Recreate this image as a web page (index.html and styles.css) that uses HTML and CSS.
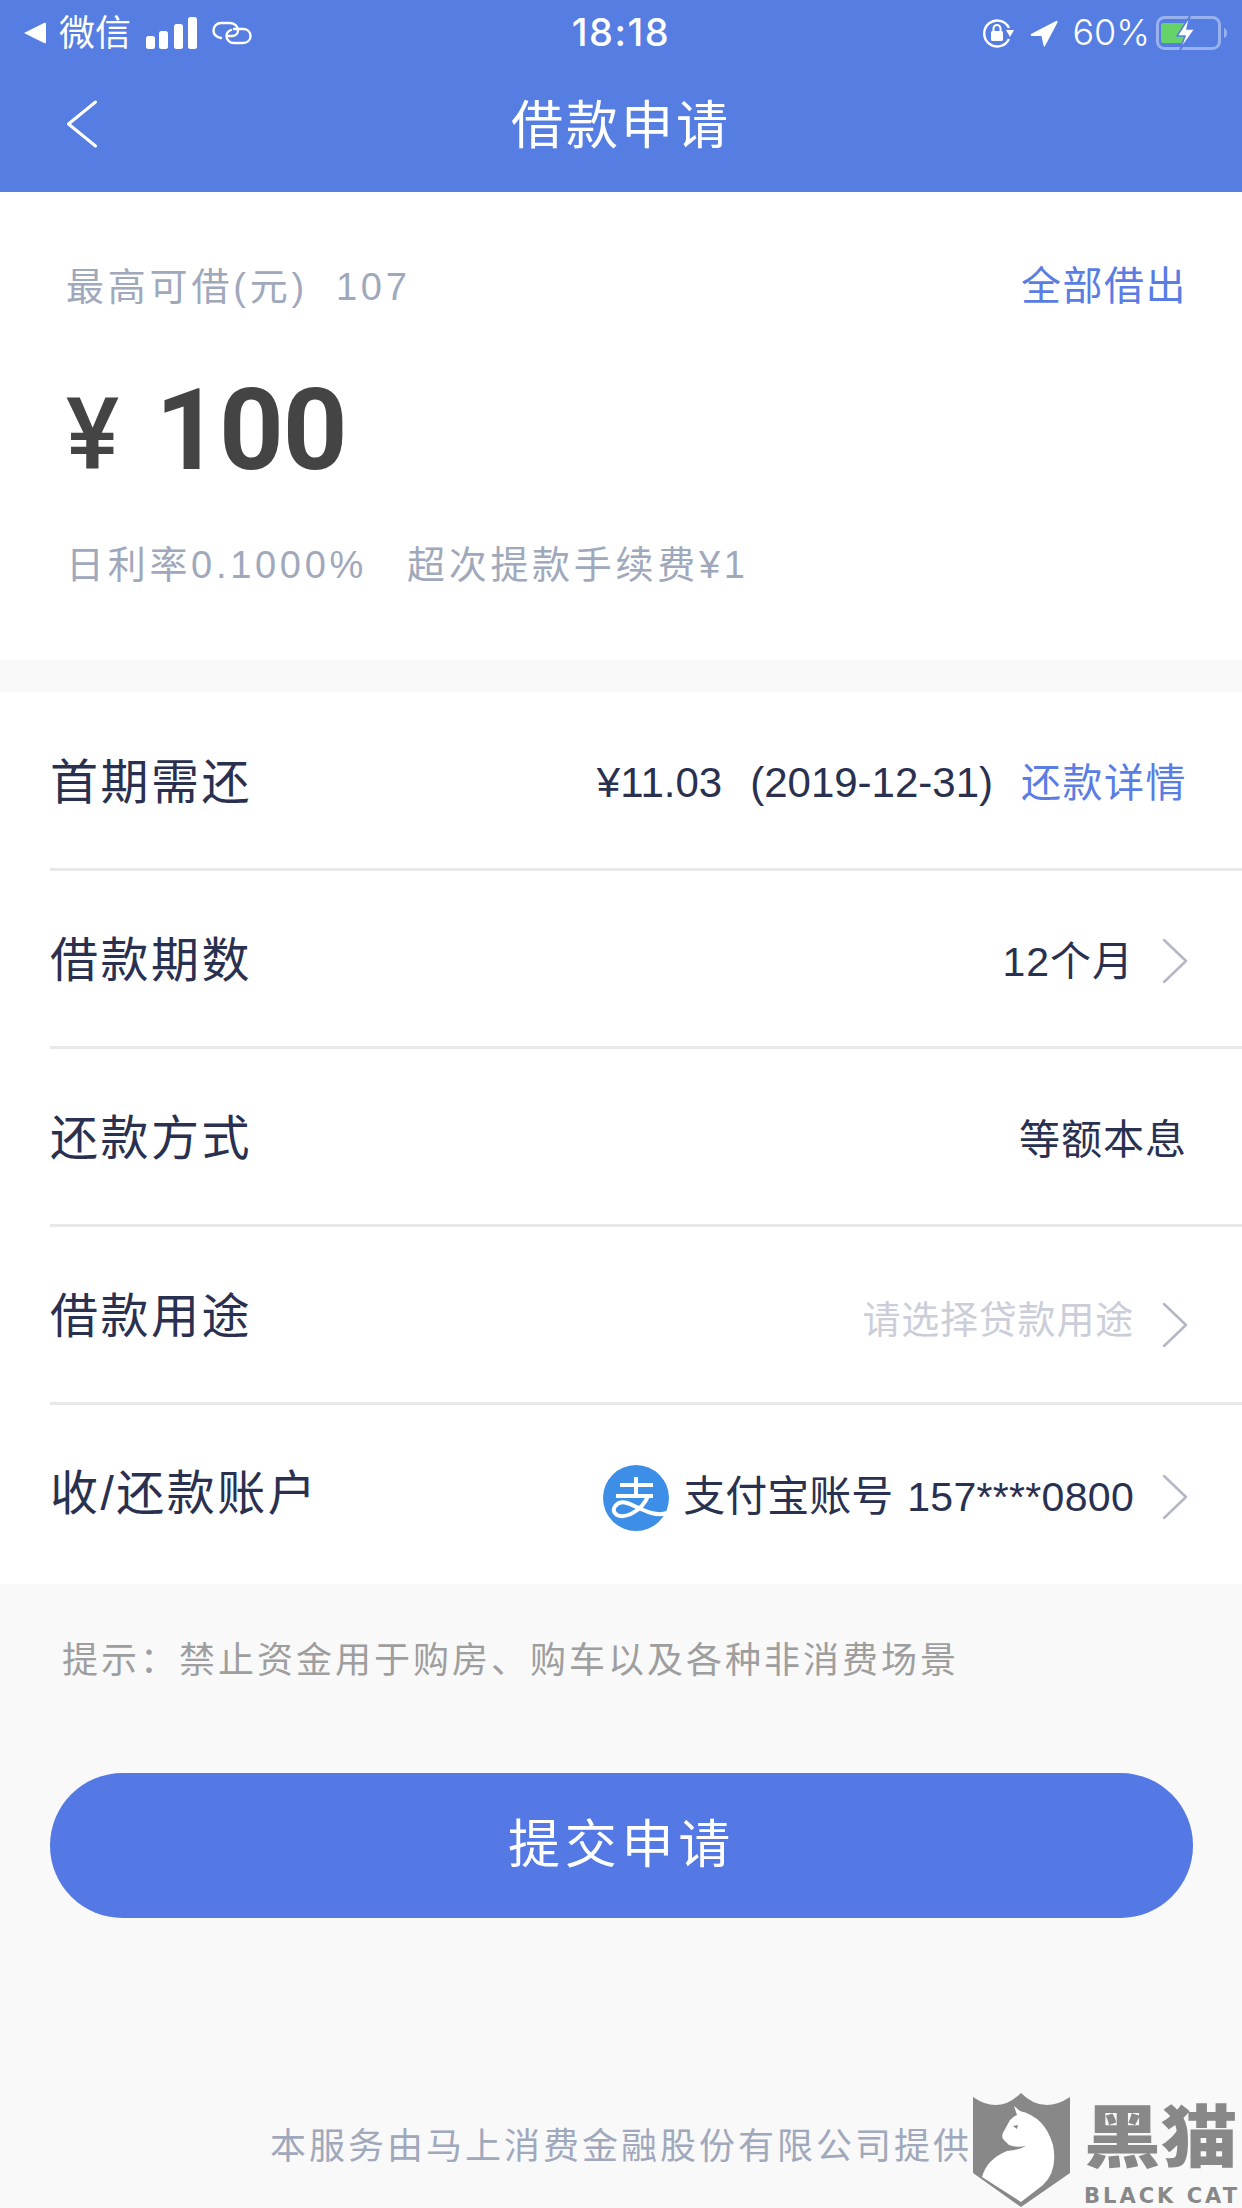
FILE: index.html
```html
<!DOCTYPE html>
<html lang="zh-CN">

<head>
    <meta charset="UTF-8">
    <title>借款申请</title>
    <link rel="stylesheet" href="styles.css">
</head>

<body>
    <header class="top">
        <div class="status">
            <div class="status-left">
                <svg class="icon-tri" width="23" height="22" viewBox="0 0 23 22"><path d="M1 11 21 1Q23 0 23 2V20Q23 22 21 21Z" fill="#fff"/></svg>
                <span class="carrier">微信</span>
                <svg class="icon-signal" width="51" height="32" viewBox="0 0 51 32" fill="#fff">
                    <rect x="0" y="19" width="9" height="13" rx="2.5"/>
                    <rect x="13" y="14" width="9" height="18" rx="2.5"/>
                    <rect x="28" y="7" width="9" height="25" rx="2.5"/>
                    <rect x="42" y="0" width="9" height="32" rx="2.5"/>
                </svg>
                <svg class="icon-link" width="40" height="24" viewBox="0 0 40 24" fill="none" stroke="#fff" stroke-width="2.4" stroke-linecap="round">
                    <path d="M9 17C4 16 1.500 13 1.500 9.500 1.500 5 5 2 9 2H18C23 2 26 6 26 9.500 26 12.500 23.500 15 20 15H16"/>
                    <path d="M22 8H31C35.500 8 38.500 11 38.500 15 38.500 19 35.500 22 31 22H22C17.500 22 14.500 18.500 14.500 15 14.500 12 16.500 10 19 9"/>
                </svg>
            </div>
            <div class="clock">18:18</div>
            <div class="status-right">
                <svg class="icon-rotate" width="32" height="30" viewBox="0 0 32 30" fill="none">
                    <path d="M27 10A13 13 0 1 0 27 21" stroke="#fff" stroke-width="2.4"/>
                    <path d="M24 12H32L28 19Z" fill="#fff"/>
                    <rect x="9" y="13" width="12" height="10" rx="1.500" fill="#fff"/>
                    <path d="M11.500 13V10.500A3.500 3.500 0 0 1 18.500 10.500V13" stroke="#fff" stroke-width="2"/>
                </svg>
                <svg class="icon-arrow" width="28" height="27" viewBox="0 0 28 27"><path d="M1 14 26 1Q28 0 27.500 2.500L15 26Q14 27.500 13.500 25.500L11.500 16 1.500 16Q0 15 1 14Z" fill="#fff"/></svg>
                <span class="percent">60%</span>
                <svg class="icon-battery" width="72" height="36" viewBox="0 0 72 36">
                    <rect x="1.500" y="2.500" width="62" height="31" rx="7" fill="none" stroke="#fff" stroke-opacity=".4" stroke-width="3"/>
                    <path d="M68 13Q71 14 71 18 71 22 68 23Z" fill="#fff" fill-opacity=".4"/>
                    <path d="M7 8H29V28H7Q5 28 5 26V10Q5 8 7 8Z" fill="#66d26a"/>
                    <path d="M34 1 21 21H29L24 35 39 14H31Z" fill="#fff" stroke="#567de2" stroke-width="1.500"/>
                </svg>
            </div>
        </div>
        <nav class="nav">
            <svg class="back" width="32" height="48" viewBox="0 0 32 48" fill="none"><path d="M29.500 2 2.500 24 29.500 46" stroke="#fff" stroke-width="3" stroke-linecap="round" stroke-linejoin="round"/></svg>
            <h1 class="title">借款申请</h1>
            <span></span>
        </nav>
    </header>

    <section class="hero">
        <div class="hero-top">
            <span class="hero-limit">最高可借(元)<span class="hero-max">107</span></span>
            <a class="link link-all">全部借出</a>
        </div>
        <div class="amount"><span class="amount-sign">¥</span><span class="amount-value">100</span></div>
        <div class="hero-sub"><span>日利率0.1000%</span><span>超次提款手续费¥1</span></div>
    </section>

    <section class="rows">
        <div class="row">
            <span class="row-label">首期需还</span>
            <div class="row-value row-first">
                <span>¥11.03</span><span>(2019-12-31)</span><a class="link">还款详情</a>
            </div>
        </div>
        <div class="row">
            <span class="row-label">借款期数</span>
            <div class="row-value">
                <span class="term">12个月</span>
                <svg class="chev" width="26" height="46" viewBox="0 0 26 46" fill="none"><path d="M2 2 24 23 2 44" stroke="#b4b7c6" stroke-width="2.500" stroke-linecap="round" stroke-linejoin="round"/></svg>
            </div>
        </div>
        <div class="row">
            <span class="row-label">还款方式</span>
            <div class="row-value"><span class="method">等额本息</span></div>
        </div>
        <div class="row">
            <span class="row-label">借款用途</span>
            <div class="row-value">
                <span class="placeholder">请选择贷款用途</span>
                <svg class="chev chev-low" width="26" height="46" viewBox="0 0 26 46" fill="none"><path d="M2 2 24 23 2 44" stroke="#b4b7c6" stroke-width="2.500" stroke-linecap="round" stroke-linejoin="round"/></svg>
            </div>
        </div>
        <div class="row row-account">
            <span class="row-label">收/还款账户</span>
            <div class="row-value">
                <svg class="alipay" width="66" height="66" viewBox="0 0 66 66" fill="none">
                    <circle cx="33" cy="33" r="33" fill="#3d8ee6"/>
                    <path d="M17 20H50M33 12V29M13 31H50" stroke="#fff" stroke-width="4"/>
                    <path d="M45 31C39 46 22 54 14 50 6 45 14 35 24 38 34 41 50 53 64 48" stroke="#fff" stroke-width="4"/>
                </svg>
                <span class="account">支付宝账号<span class="account-no">157****0800</span></span>
                <svg class="chev" width="26" height="46" viewBox="0 0 26 46" fill="none"><path d="M2 2 24 23 2 44" stroke="#b4b7c6" stroke-width="2.500" stroke-linecap="round" stroke-linejoin="round"/></svg>
            </div>
        </div>
    </section>

    <p class="tip">提示：禁止资金用于购房、购车以及各种非消费场景</p>

    <div class="submit">提交申请</div>

    <footer class="foot">本服务由马上消费金融股份有限公司提供</footer>

    <!-- watermark sits over the page -->
    <div class="mark">
        <svg class="mark-shield" width="97" height="114" viewBox="0 0 97 114">
            <path d="M0 4Q26 22 48 0 70 22 97 4V80L48 114 0 80Z" fill="#888"/>
            <path d="M41 13 47 18Q72 24 80 52 85 78 70 92L48 109 9 84Q14 66 34 58 46 57 53 53 44 55 36 52L30 46Q28 42 31 38L37 27Q41 23 44 22Z" fill="#fff"/>
            <path d="M40 33 45 32 44 36Z" fill="#888"/>
        </svg>
        <div class="mark-text">
            <span class="mark-cn">黑猫</span>
            <span class="mark-en">BLACK CAT</span>
        </div>
    </div>
</body>

</html>
```

FILE: styles.css
```css
* {
    box-sizing: border-box;
}

body {
    position: relative;
    width: 1242px;
    height: 2208px;
    margin: 0;
    overflow: hidden;
    background-color: #f9f9f9;
    font-family: "Liberation Sans", "Noto Sans CJK SC", sans-serif;
    color: #2a3150;
}

.top {
    height: 192px;
    background-color: #567de2;
    color: #fff;
}

.status {
    display: grid;
    grid-template-columns: 1fr auto 1fr;
    align-items: center;
    height: 62px;
    padding-top: 2px;
}

.status-left {
    display: flex;
    align-items: center;
    padding-left: 23px;
}

.carrier {
    margin-left: 13px;
    padding-top: 2px;
    font-size: 36px;
    line-height: 60px;
}

.icon-signal {
    margin-left: 15px;
}

.icon-link {
    margin-left: 15px;
}

.clock {
    margin-bottom: 3px;
    font-family: Inter, sans-serif;
    font-size: 38px;
    font-weight: 500;
    letter-spacing: 1.500px;
}

.status-right {
    display: flex;
    align-items: center;
    justify-content: flex-end;
    padding-right: 14px;
}

.icon-arrow {
    margin-left: 16px;
}

.percent {
    margin-left: 14px;
    margin-bottom: 3px;
    font-family: Inter, sans-serif;
    font-size: 36px;
    font-weight: 300;
}

.icon-battery {
    margin-left: 6px;
}

.nav {
    display: grid;
    grid-template-columns: 1fr auto 1fr;
    align-items: center;
    height: 130px;
    padding: 0 66px 6px;
}

.title {
    margin: 0 0 6px;
    font-size: 52px;
    font-weight: 400;
    letter-spacing: 3px;
}

.hero {
    height: 468px;
    padding: 66px 55px 0 66px;
    background-color: #fff;
}

.hero-top {
    display: flex;
    justify-content: space-between;
    align-items: center;
    height: 50px;
    font-size: 38px;
}

.hero-limit {
    color: #a0a8bc;
    letter-spacing: 3.800px;
}

.hero-max {
    margin-left: 28px;
}

.link {
    color: #5a7de4;
    font-size: 40px;
    letter-spacing: 1.500px;
}

.amount {
    display: flex;
    align-items: baseline;
    height: 140px;
    margin-top: 53px;
    line-height: 140px;
    color: #444;
    font-family: Roboto, sans-serif;
}

.amount-sign {
    font-size: 100px;
    font-weight: 500;
}

.amount-value {
    margin-left: 36px;
    font-size: 113px;
    font-weight: 700;
    letter-spacing: -1px;
}

.hero-sub {
    display: flex;
    gap: 40px;
    height: 50px;
    margin-top: 39px;
    line-height: 50px;
    color: #a0a8bc;
    font-size: 38px;
    letter-spacing: 3.700px;
}

.rows {
    margin-top: 32px;
    padding-left: 50px;
    background-color: #fff;
}

.row {
    display: flex;
    justify-content: space-between;
    align-items: center;
    height: 178px;
    padding-right: 55px;
    border-bottom: 3px solid #e8e8e8;
}

.row:first-child {
    height: 179px;
}

.row-account {
    height: 179px;
    border-bottom: 0;
}

.row-label {
    margin-bottom: 5px;
    font-size: 48px;
    letter-spacing: 2.500px;
}

.row-account .row-label {
    margin-bottom: 11px;
}

.row-value {
    display: flex;
    align-items: center;
    font-size: 40px;
}

.row-first {
    align-items: baseline;
}

.row-first span {
    margin-right: 28px;
    font-size: 42px;
}

.term,
.method {
    margin-bottom: 2px;
    font-size: 41px;
    letter-spacing: 1px;
}

.placeholder {
    margin-top: 3px;
    color: #cbced9;
    font-size: 38px;
    letter-spacing: .8px;
}

.chev {
    margin-top: 5px;
    margin-left: 28px;
    margin-right: -1px;
}

.chev-low {
    margin-top: 20px;
}

.alipay {
    margin-top: 6px;
}

.account {
    margin-bottom: 4px;
    margin-left: 14px;
    font-size: 42px;
}

.account-no {
    margin-left: 14px;
    font-size: 41px;
    letter-spacing: .3px;
}

.tip {
    height: 50px;
    margin: 52px 0 0 62px;
    line-height: 50px;
    color: #9e9e9e;
    font-size: 36px;
    letter-spacing: 3px;
}

.submit {
    height: 145px;
    margin: 87px 49px 0 50px;
    border-radius: 73px;
    background-color: #5479e4;
    color: #fff;
    font-size: 52px;
    letter-spacing: 4.800px;
    line-height: 145px;
    text-align: center;
}

.foot {
    margin-top: 204px;
    line-height: 50px;
    color: #a0a8bc;
    font-size: 36px;
    letter-spacing: 3px;
    text-align: center;
}

.mark {
    position: absolute;
    left: 973px;
    top: 2093px;
    display: flex;
    gap: 14px;
    color: #888;
}

.mark-text {
    display: flex;
    flex-direction: column;
    margin-top: -2px;
}

.mark-cn {
    font-family: "Noto Sans CJK SC", sans-serif;
    font-size: 68px;
    font-weight: 900;
    line-height: 84px;
    white-space: nowrap;
    transform: scaleX(1.13);
    transform-origin: left center;
}

.mark-en {
    margin-top: 10px;
    font-family: "DejaVu Sans", sans-serif;
    font-size: 21px;
    font-weight: 700;
    letter-spacing: 3px;
    line-height: 22px;
    white-space: nowrap;
}
```
